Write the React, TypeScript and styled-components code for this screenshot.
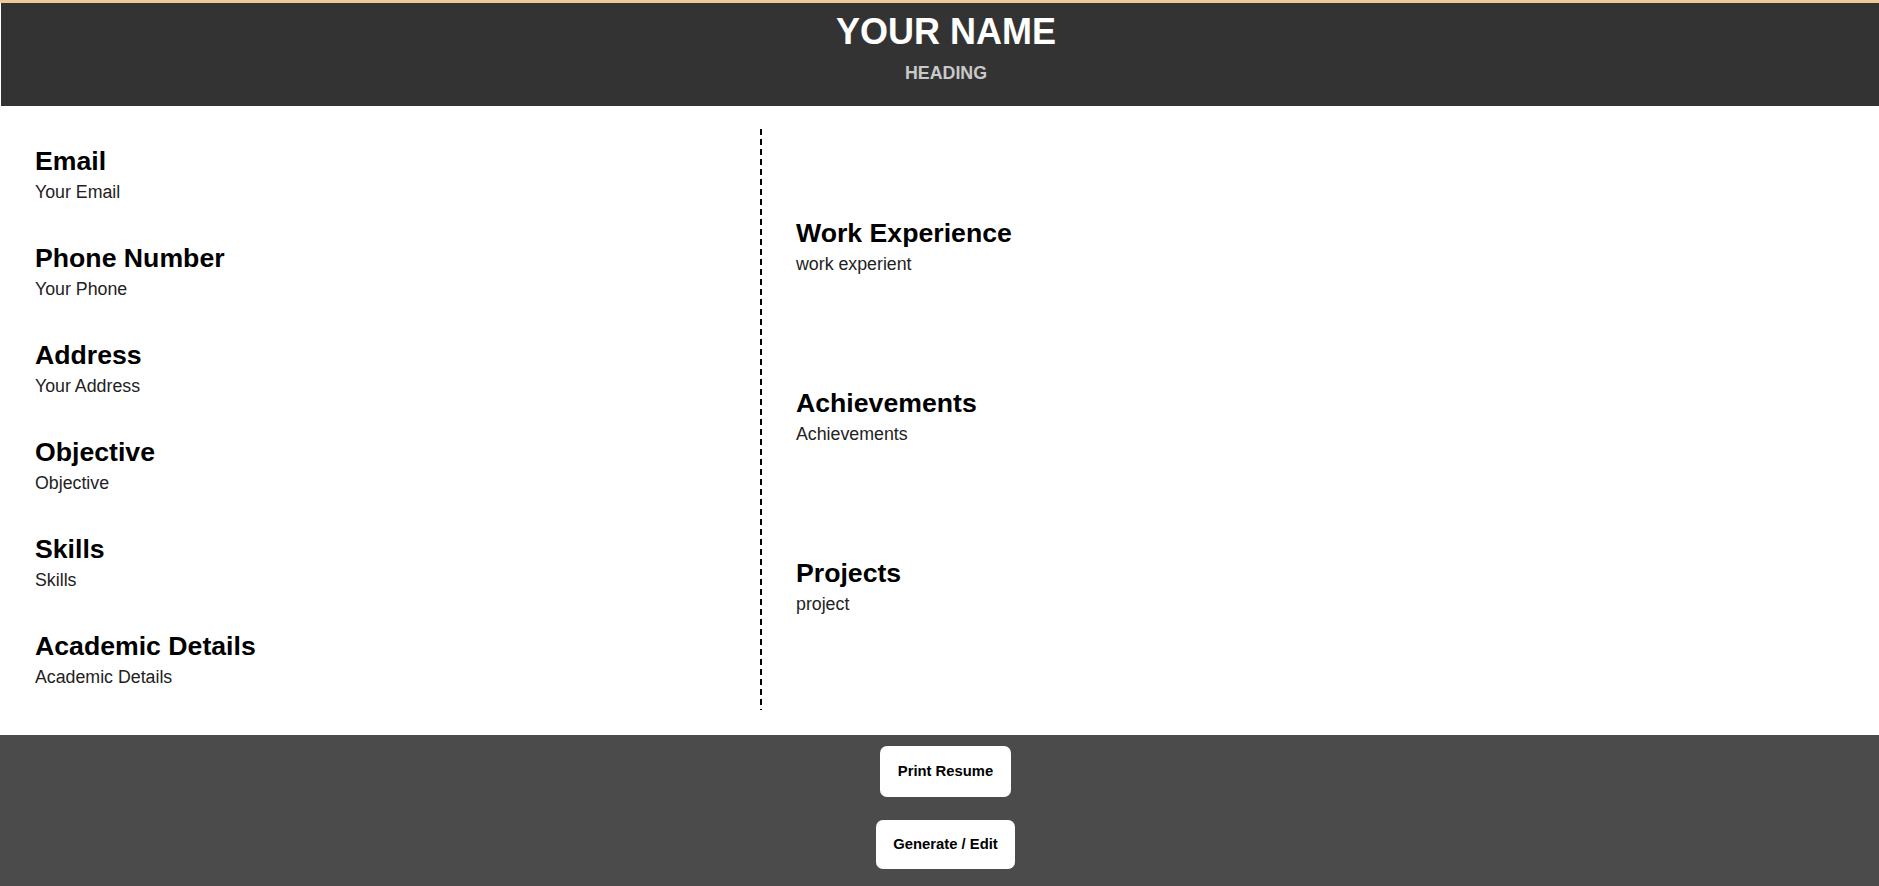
import React from "react";
import styled, { createGlobalStyle } from "styled-components";

const GlobalStyle = createGlobalStyle`
  html, body {
    margin: 0;
    padding: 0;
    background: #4b4b4b;
    font-family: "Liberation Sans", Arial, Helvetica, sans-serif;
  }
  * { box-sizing: border-box; }
`;

const Page = styled.div`
  display: flex;
  flex-direction: column;
  border-top: 3px solid #efca99;
  background: #ffffff;
`;

const Header = styled.header`
  display: flex;
  flex-direction: column;
  align-items: center;
  background: #333333;
  margin-left: 1px;
  padding: 8px 0 23px 12px;
`;

const Name = styled.h1`
  margin: 0;
  font-size: 36px;
  line-height: 41px;
  font-weight: 700;
  color: #ffffff;
`;

const Subtitle = styled.div`
  margin-top: 11px;
  font-size: 17.8px;
  line-height: 20px;
  font-weight: 700;
  color: #c9c9c9;
`;

const Main = styled.main`
  display: flex;
  align-items: stretch;
  padding: 23px 0 25px;
  background: #ffffff;
`;

const Column = styled.div<{ $width?: string; $top: number; $gap: number; $left: number }>`
  display: flex;
  flex-direction: column;
  gap: ${(p) => p.$gap}px;
  width: ${(p) => p.$width ?? "auto"};
  flex: ${(p) => (p.$width ? "none" : "1")};
  padding: ${(p) => p.$top}px 0 23px ${(p) => p.$left}px;
`;

const Divider = styled.div`
  width: 2px;
  flex: none;
  background: repeating-linear-gradient(
    to bottom,
    #000 0px,
    #000 6px,
    transparent 6px,
    transparent 10px
  );
`;

const Section = styled.section`
  display: flex;
  flex-direction: column;
  gap: 5px;
`;

const SectionTitle = styled.h2`
  margin: 0;
  font-size: 26.67px;
  line-height: 31px;
  font-weight: 700;
  color: #000000;
`;

const SectionText = styled.p`
  margin: 0;
  font-size: 17.78px;
  line-height: 20px;
  color: #222222;
`;

const Footer = styled.footer`
  display: flex;
  flex-direction: column;
  align-items: center;
  gap: 23px;
  padding: 11px 0 15px 12px;
  background: #4b4b4b;
`;

const Button = styled.button<{ $h: number }>`
  font-family: "Liberation Sans", Arial, Helvetica, sans-serif;
  font-size: 14.8px;
  font-weight: 700;
  line-height: 17px;
  color: #000;
  background: #ffffff;
  border: none;
  border-radius: 7px;
  height: ${(p) => p.$h}px;
  padding: 0 17.5px;
  cursor: pointer;
`;

const leftItems = [
  ["Email", "Your Email"],
  ["Phone Number", "Your Phone"],
  ["Address", "Your Address"],
  ["Objective", "Objective"],
  ["Skills", "Skills"],
  ["Academic Details", "Academic Details"],
];

const rightItems = [
  ["Work Experience", "work experient"],
  ["Achievements", "Achievements"],
  ["Projects", "project"],
];

export default function App() {
  return (
    <>
      <GlobalStyle />
      <Page>
        <Header>
          <Name>YOUR NAME</Name>
          <Subtitle>HEADING</Subtitle>
        </Header>
        <Main>
          <Column $width="760px" $top={17} $gap={41} $left={35}>
            {leftItems.map(([t, v]) => (
              <Section key={t}>
                <SectionTitle>{t}</SectionTitle>
                <SectionText>{v}</SectionText>
              </Section>
            ))}
          </Column>
          <Divider />
          <Column $top={89} $gap={114} $left={34}>
            {rightItems.map(([t, v]) => (
              <Section key={t}>
                <SectionTitle>{t}</SectionTitle>
                <SectionText>{v}</SectionText>
              </Section>
            ))}
          </Column>
        </Main>
        <Footer>
          <Button $h={51}>Print Resume</Button>
          <Button $h={49}>Generate / Edit</Button>
        </Footer>
      </Page>
    </>
  );
}
